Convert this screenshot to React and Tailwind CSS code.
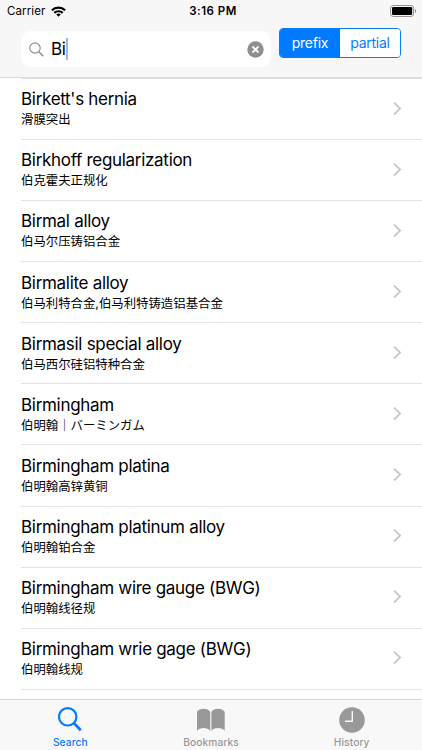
const entries = [
    { term: "Birkett's hernia", meaning: '滑膜突出' },
    { term: 'Birkhoff regularization', meaning: '伯克霍夫正规化' },
    { term: 'Birmal alloy', meaning: '伯马尔压铸铝合金' },
    { term: 'Birmalite alloy', meaning: '伯马利特合金,伯马利特铸造铝基合金' },
    { term: 'Birmasil special alloy', meaning: '伯马西尔硅铝特种合金' },
    { term: 'Birmingham', meaning: '伯明翰｜バーミンガム' },
    { term: 'Birmingham platina', meaning: '伯明翰高锌黄铜' },
    { term: 'Birmingham platinum alloy', meaning: '伯明翰铂合金' },
    { term: 'Birmingham wire gauge (BWG)', meaning: '伯明翰线径规' },
    { term: 'Birmingham wrie gage (BWG)', meaning: '伯明翰线规' },
];

const StatusBar = () => (
    <div className="grid grid-cols-3 items-center h-[22px] pl-[7px] pr-[5px] text-[11.5px] leading-none text-black">
        <div className="flex items-center gap-[6px] pt-px">
            <span className="tracking-[0.1px]">Carrier</span>
            <svg className="-mt-px" width="15" height="11" viewBox="0 0 14 10" fill="none" stroke="#000" strokeWidth="2">
                <path d="M0.8 3.9a8.8 8.8 0 0 1 12.4 0" />
                <path d="M3.1 6.3a5.6 5.6 0 0 1 7.8 0" />
                <path d="M7 10 4.9 7.9a3 3 0 0 1 4.2 0z" fill="#000" stroke="none" />
            </svg>
        </div>
        <span className="pt-px pl-[2px] text-center font-semibold tracking-[0.5px]">3:16 PM</span>
        <svg className="justify-self-end" width="27" height="12" viewBox="0 0 27 12">
            <rect x="0.6" y="0.6" width="23" height="10.8" rx="2.6" fill="#fff" stroke="#8b8b8b" />
            <rect x="2" y="2" width="20.2" height="8" rx="1.3" fill="#000" />
            <path d="M25 4v4c1.6-.6 1.6-3.4 0-4z" fill="#8b8b8b" />
        </svg>
    </div>
);

const SearchField = () => (
    <div className="flex items-center w-[250px] h-9 mt-[9px] pl-2 pr-[7px] rounded-[10px] bg-white">
        <svg width="15" height="15" viewBox="0 0 15 15" fill="none" stroke="#8e8e93" strokeWidth="1.2">
            <circle cx="6" cy="6" r="5.2" />
            <path d="M9.8 9.8 14.3 14.3" strokeWidth="1.5" />
        </svg>
        <span className="ml-[7px] text-[17px] leading-none tracking-[-0.3px]">Bi</span>
        <span className="w-[2px] h-[22px] -mt-px bg-[#a5b4ee]" />
        <svg className="ml-auto" width="17" height="17" viewBox="0 0 17 17">
            <circle cx="8.5" cy="8.5" r="8.2" fill="#8e8e93" />
            <path d="M5.5 5.5l6 6M11.5 5.5l-6 6" stroke="#fff" strokeWidth="1.8" />
        </svg>
    </div>
);

const Row = ({ term, meaning }) => (
    <li className="flex items-center justify-between h-[61.08px] ml-[21px] pr-5 pb-[0.5px] border-b border-[#e4e4e6]">
        <div>
            <div className="text-[17px] leading-[22px] tracking-[-0.3px]">{term}</div>
            <div className="mt-px text-[12.4px] leading-[18px]">{meaning}</div>
        </div>
        <svg width="10" height="14" viewBox="0 0 10 14" fill="none" stroke="#c7c7cc" strokeWidth="1.8">
            <path d="M2 0.7 8.1 6.6 2 12.5" />
        </svg>
    </li>
);

const Tab = ({ label, active, children }) => (
    <div className={active ? 'flex flex-col items-center flex-1 text-[#0a7aff]' : 'flex flex-col items-center flex-1 text-[#999999]'}>
        <div className="flex items-center justify-center h-[39px]">{children}</div>
        <span className="text-[10.2px] leading-[7px] font-medium tracking-[0.1px]">{label}</span>
    </div>
);

const App = () => {
    return (
        <div className="flex flex-col w-[422px] h-[750px] overflow-hidden bg-white text-black font-['Inter','Noto_Sans_CJK_SC',sans-serif]">
            <header className="h-[78px] shrink-0 bg-[#f7f7f7] border-b border-[#dcdce0]">
                <StatusBar />
                <div className="flex items-start pl-[21px]">
                    <SearchField />
                    <div className="flex w-[122px] h-[30px] ml-2 mt-[6px] overflow-hidden rounded-[4px] border border-[#087cff] text-[14px] leading-none tracking-[-0.25px]">
                        <button className="w-[60px] bg-[#007aff] text-white">prefix</button>
                        <button className="flex-1 bg-white text-[#087cff]">partial</button>
                    </div>
                </div>
            </header>

            <ul className="flex-1 min-h-0 overflow-hidden">
                <li className="h-px ml-[21px] bg-[#e0e0e4]" />
                {entries.map((entry) => (
                    <Row key={entry.term} {...entry} />
                ))}
            </ul>

            <nav className="flex h-[51px] shrink-0 bg-[#f8f8f8] border-t border-[#d6d6d8]">
                <Tab label="Search" active>
                    <svg width="24" height="25" viewBox="0 0 24 25" fill="none" stroke="currentColor">
                        <circle cx="9.7" cy="9.8" r="8.7" strokeWidth="2.2" />
                        <path d="M16 16.2 22.8 23.2" strokeWidth="2.8" />
                    </svg>
                </Tab>
                <Tab label="Bookmarks">
                    <svg width="28" height="24" viewBox="0 0 28 24" fill="currentColor">
                        <path d="M0 3.8C1.2 1.7 3.5.7 6.5.7s5.4 1 6.7 3.1v19.1c-1.5-1.8-3.8-2.8-6.7-2.8s-5 .9-6.5 2.8z" />
                        <path d="M14.4 3.8C15.7 1.7 18 .7 21 .7s5.4 1 6.7 3.1v19.1c-1.5-1.8-3.8-2.8-6.7-2.8s-5.1.9-6.6 2.8z" />
                    </svg>
                </Tab>
                <Tab label="History">
                    <svg width="26" height="26" viewBox="0 0 26 26">
                        <circle cx="13" cy="13" r="12.8" fill="currentColor" />
                        <path d="M13.3 4v10.2H6" fill="none" stroke="#f8f8f8" strokeWidth="1.4" />
                    </svg>
                </Tab>
            </nav>
        </div>
    );
};

export default App;
